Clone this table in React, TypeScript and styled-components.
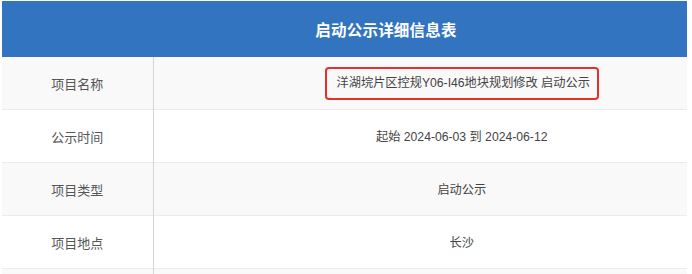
import styled, { createGlobalStyle } from 'styled-components';

const GlobalStyle = createGlobalStyle`
    html, body {
        margin: 0;
        padding: 0;
        background: #fff;
        font-family: "Liberation Sans", "Noto Sans CJK SC", sans-serif;
    }
`

const Frame = styled.div`
    width: 685px;
    height: 274px;
    padding: 1px 0 0 2px;
    overflow: hidden;
`

const Table = styled.table`
    width: 768px;
    border-collapse: collapse;
    table-layout: fixed;
`

const Col = styled.col<{ $width?: number }>`
    width: ${p => (p.$width ? `${p.$width}px` : 'auto')};
`

const HeadCell = styled.th`
    height: 56px;
    padding: 0;
    background-color: #3274c0;
    color: #fff;
    font-size: 15.5px;
    font-weight: 700;
    text-align: center;
    letter-spacing: 0.2px;
`

const Row = styled.tr<{ $shaded: boolean }>`
    background-color: ${p => (p.$shaded ? '#f9f9f9' : '#fff')};
    border-bottom: 1px solid #ececec;
`

const Label = styled.td`
    height: 52px;
    padding: 0;
    text-align: center;
    font-size: 13px;
    color: #555;
    border-right: 1px solid #d4d4d4;
`

const Value = styled.td`
    padding: 0;
    text-align: center;
    font-size: 12.2px;
    color: #444;
`

const Marked = styled.span`
    display: inline-block;
    padding: 7px 7px 7px 10px;
    border: 2px solid #e5302b;
    border-radius: 4px;
    line-height: 15px;
`

const rows = [
    { label: '项目名称', value: '洋湖垸片区控规Y06-I46地块规划修改 启动公示', marked: true },
    { label: '公示时间', value: '起始 2024-06-03 到 2024-06-12' },
    { label: '项目类型', value: '启动公示' },
    { label: '项目地点', value: '长沙' },
    { label: '', value: '' },
]

const App = () => {
    return (
        <Frame>
            <GlobalStyle />
            <Table>
                <colgroup>
                    <Col $width={151} />
                    <Col />
                </colgroup>
                <thead>
                    <tr>
                        <HeadCell colSpan={2}>启动公示详细信息表</HeadCell>
                    </tr>
                </thead>
                <tbody>
                    {rows.map((row, i) => (
                        <Row key={i} $shaded={i % 2 === 0}>
                            <Label>{row.label}</Label>
                            <Value>
                                {row.marked ? <Marked>{row.value}</Marked> : row.value}
                            </Value>
                        </Row>
                    ))}
                </tbody>
            </Table>
        </Frame>
    )
}

export default App
